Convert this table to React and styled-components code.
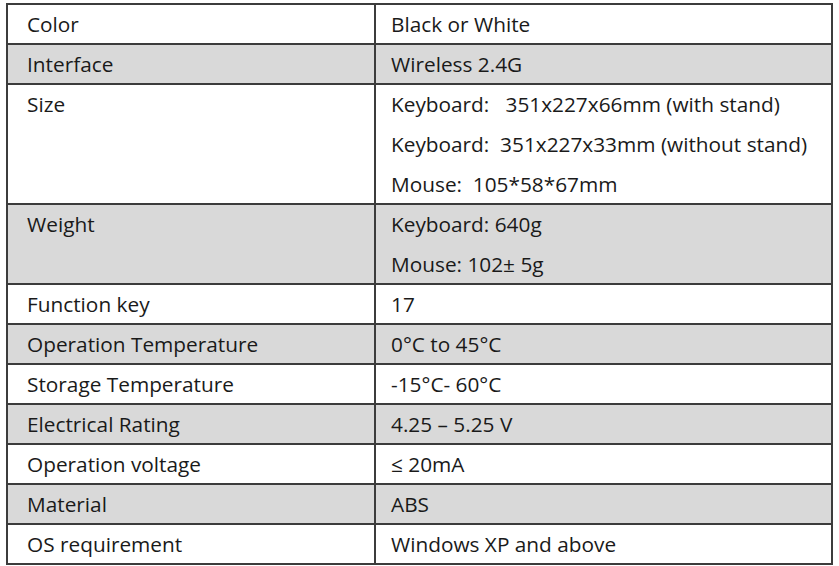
import React from 'react';
import styled, { createGlobalStyle } from 'styled-components';

const GlobalStyle = createGlobalStyle`
  html, body {
    margin: 0;
    padding: 0;
    background: #ffffff;
  }
`;

const Page = styled.div`
  padding: 3px 6px 0 6px;
  font-family: "Open Sans", "Liberation Sans", sans-serif;
  color: #1a1a1a;
`;

const SpecTable = styled.table`
  width: 827px;
  border-collapse: collapse;
  table-layout: fixed;
  border: 2px solid #4a4a4a;
`;

const LabelCol = styled.col`
  width: 368px;
`;

const Row = styled.tr`
  background: ${props => (props.shaded ? '#d9d9d9' : '#ffffff')};
`;

const Cell = styled.td`
  border: 2px solid #3c3c3c;
  padding: 0 0 0 ${props => (props.label ? '19px' : '15px')};
  vertical-align: top;
  font-size: 20.8px;
  white-space: pre;
`;

const Line = styled.div`
  height: 40px;
  line-height: 38px;

  &:last-child {
    height: 38px;
  }
`;

const specs = [
  { label: 'Color', values: ['Black or White'] },
  { label: 'Interface', values: ['Wireless 2.4G'] },
  {
    label: 'Size',
    values: [
      'Keyboard:   351x227x66mm (with stand)',
      'Keyboard:  351x227x33mm (without stand)',
      'Mouse:  105*58*67mm',
    ],
  },
  { label: 'Weight', values: ['Keyboard: 640g', 'Mouse: 102\u00b1 5g'] },
  { label: 'Function key', values: ['17'] },
  { label: 'Operation Temperature', values: ['0\u00b0C to 45\u00b0C'] },
  { label: 'Storage Temperature', values: ['-15\u00b0C- 60\u00b0C'] },
  { label: 'Electrical Rating', values: ['4.25 \u2013 5.25 V'] },
  { label: 'Operation voltage', values: ['\u2264 20mA'] },
  { label: 'Material', values: ['ABS'] },
  { label: 'OS requirement', values: ['Windows XP and above'] },
];

export default function App() {
  return (
    <Page>
      <GlobalStyle />
      <SpecTable>
        <colgroup>
          <LabelCol />
          <col />
        </colgroup>
        <tbody>
          {specs.map((spec, i) => (
            <Row key={spec.label} shaded={i % 2 === 1}>
              <Cell label>
                <Line>{spec.label}</Line>
              </Cell>
              <Cell>
                {spec.values.map(v => (
                  <Line key={v}>{v}</Line>
                ))}
              </Cell>
            </Row>
          ))}
        </tbody>
      </SpecTable>
    </Page>
  );
}
